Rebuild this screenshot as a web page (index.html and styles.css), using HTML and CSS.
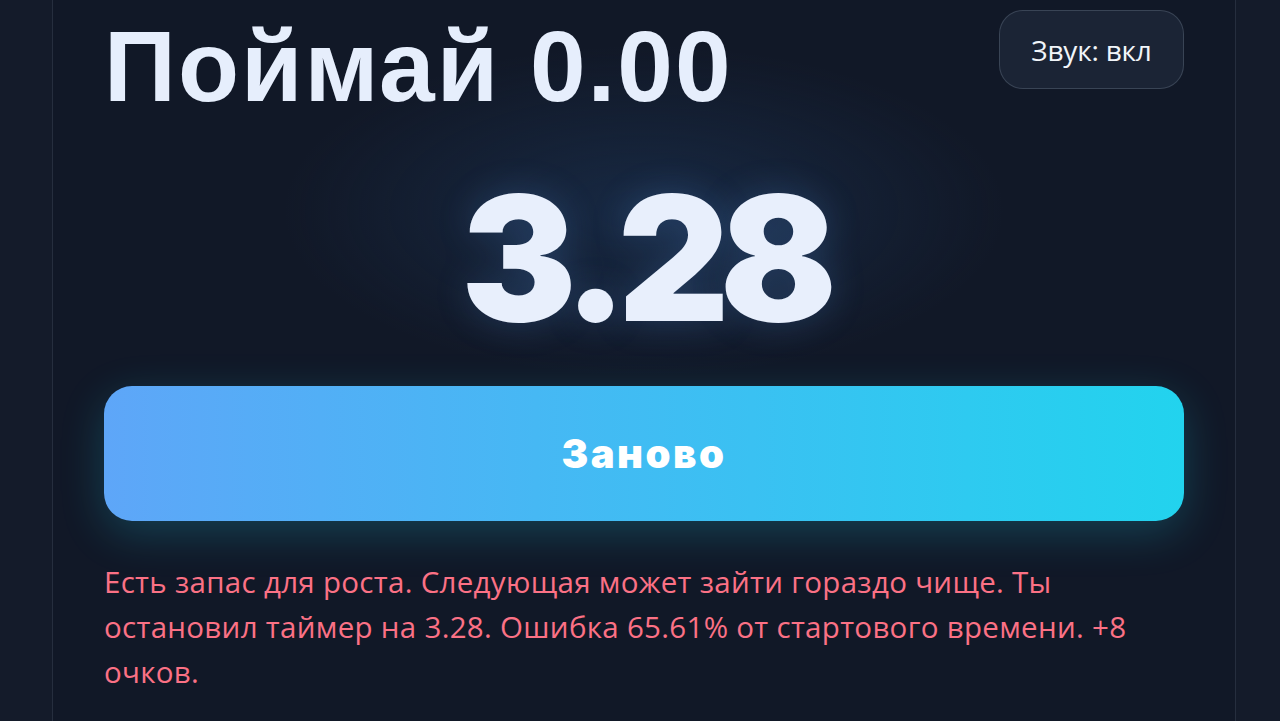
FILE: index.html
```html
<!DOCTYPE html>
<html lang="ru">
  <head>
    <meta charset="utf-8" />
    <title>Поймай 0.00</title>
    <link rel="stylesheet" href="styles.css">
  </head>
  <body>
    <main class="card">
      <header class="top">
        <h1 class="goal">Поймай 0.00</h1>
        <button class="sound" id="sound">Звук: вкл</button>
      </header>
      <div class="timer">3.28</div>
      <button class="restart" id="restart">Заново</button>
      <p class="verdict">
        Есть запас для роста. Следующая может зайти гораздо чище. Ты
        остановил таймер на 3.28. Ошибка 65.61% от стартового времени. +8
        очков.
      </p>
    </main>
  </body>
</html>
```

FILE: styles.css
```css
html, body {
  height: 100%;
}
body {
  margin: 0;
  background: #141b2a;
  overflow: hidden;
}
.card {
  margin: -40px 44px 0 52px;
  padding: 49px 51px 60px;
  min-height: 800px;
  border: 1px solid rgba(148, 163, 184, 0.16);
  border-radius: 28px;
  background: radial-gradient(ellipse 480px 220px at 50% 250px, rgba(30, 58, 95, 0.5), rgba(17, 24, 39, 0) 75%), #111827;
}
.top {
  display: flex;
  align-items: flex-start;
  justify-content: space-between;
}
.goal {
  margin: 6px 0 0;
  font: 700 100px/1 "Liberation Sans", Arial, sans-serif;
  color: #e6eefc;
  letter-spacing: 2px;
}
.sound {
  width: 185px;
  height: 79px;
  border: 1px solid rgba(148, 163, 184, 0.25);
  border-radius: 24px;
  background: #1b2435;
  color: #f1f5f9;
  font: 400 28px "Open Sans", sans-serif;
  letter-spacing: -0.2px;
}
.timer {
  margin-top: 56px;
  text-align: center;
  font: 900 173px/1 Inter, sans-serif;
  letter-spacing: -10px;
  color: #e8effc;
  text-shadow: 0 0 36px rgba(96, 165, 250, 0.22);
}
.restart {
  display: block;
  width: 100%;
  height: 135px;
  margin-top: 41px;
  border: 0;
  border-radius: 28px;
  background: linear-gradient(90deg, #5ea6f8, #22d3ee);
  box-shadow: 0 12px 44px rgba(34, 211, 238, 0.22);
  color: #fff;
  font: 900 40px Inter, sans-serif;
  letter-spacing: 2.5px;
}
.verdict {
  margin: 38px 0 0;
  font: 400 29.5px/45px "Open Sans", sans-serif;
  letter-spacing: 0.3px;
  color: #fb7185;
}
```
